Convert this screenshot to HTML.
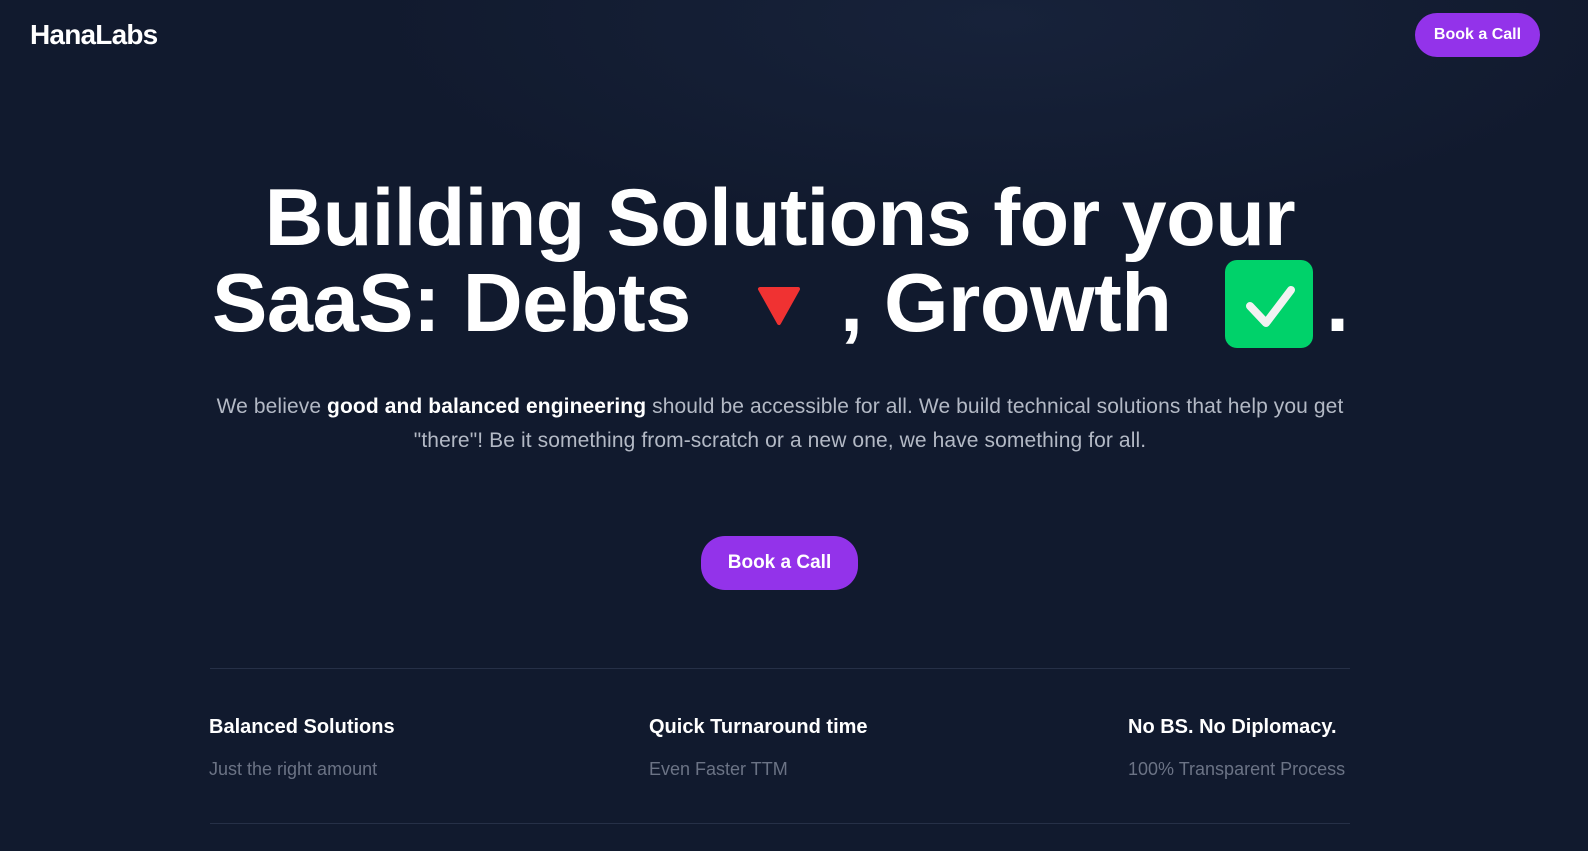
<!DOCTYPE html>
<html><head><style>
body{margin:0;width:1588px;height:851px;overflow:hidden;background:radial-gradient(ellipse 900px 300px at 1000px 20px,#17223a,#111a2e 70%),#111a2e;background-color:#111a2e;font-family:"Liberation Sans",sans-serif;color:#fff;position:relative}
.logo{position:absolute;left:30px;top:19px;font-size:28px;font-weight:bold;letter-spacing:-0.8px}
.btn{position:absolute;background:#9333ea;color:#fff;font-weight:bold;border-radius:24px;text-align:center}
.h{position:absolute;margin:0;font-size:83px;line-height:92px;letter-spacing:-0.5px;font-weight:bold;white-space:nowrap}
.p{position:absolute;left:180px;width:1200px;top:390px;text-align:center;font-size:21px;line-height:34px;color:#b3b9c5;letter-spacing:0.1px}
.p b{color:#fff}
.line{position:absolute;left:210px;width:1140px;height:1px;background:#263047}
.f h3{position:absolute;margin:0;font-size:20px;font-weight:bold}
.f div{position:absolute;font-size:18px;color:#6b7385}
</style></head><body>
<div class="logo">HanaLabs</div>
<div class="btn" style="left:1415px;top:13px;width:125px;height:44px;line-height:44px;font-size:16px">Book a Call</div>
<div class="h" style="left:0;width:1560px;text-align:center;top:172px;font-size:81px">Building Solutions for your</div>
<div class="h" style="left:212px;top:257px">SaaS: Debts</div>
<svg width="44" height="40" viewBox="0 0 44 40" style="position:absolute;left:757px;top:286px"><path d="M3 3 H41 L22 37 Z" fill="#f03232" stroke="#f03232" stroke-width="4" stroke-linejoin="round"/></svg>
<div class="h" style="left:840px;top:257px">,</div>
<div class="h" style="left:884px;top:257px">Growth</div>
<svg width="88" height="88" viewBox="0 0 88 88" style="position:absolute;left:1225px;top:260px"><rect width="88" height="88" rx="12" fill="#00d26a"/><path d="M25 46 L41 63 L66 30" fill="none" stroke="#f2f2f2" stroke-width="8" stroke-linecap="round" stroke-linejoin="round"/></svg>
<div class="h" style="left:1326px;top:257px">.</div>
<div class="p">We believe <b>good and balanced engineering</b> should be accessible for all. We build technical solutions that help you get<br>"there"! Be it something from-scratch or a new one, we have something for all.</div>
<div class="btn" style="left:701px;top:536px;width:157px;height:54px;line-height:54px;font-size:19px">Book a Call</div>
<div class="line" style="top:668px"></div>
<div class="line" style="top:823px"></div>
<div class="f">
<h3 style="left:209px;top:716px">Balanced Solutions</h3><div style="left:209px;top:759px">Just the right amount</div>
<h3 style="left:649px;top:716px">Quick Turnaround time</h3><div style="left:649px;top:759px">Even Faster TTM</div>
<h3 style="left:1128px;top:716px">No BS. No Diplomacy.</h3><div style="left:1128px;top:759px">100% Transparent Process</div>
</div>
</body></html>
